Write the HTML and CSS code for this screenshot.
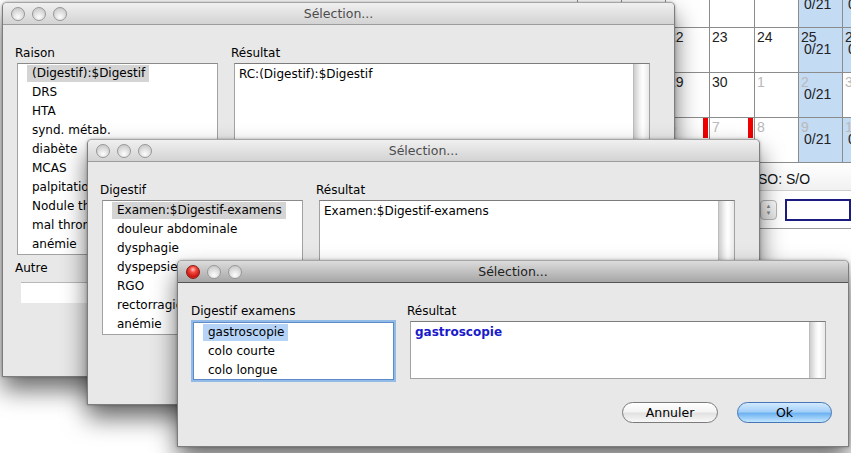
FILE: index.html
```html
<!DOCTYPE html>
<html lang="fr">
<head>
    <meta charset="UTF-8">
    <title>Sélection...</title>
    <link rel="stylesheet" href="styles.css">
</head>
<body>
<div class="desktop">

    <!-- application derrière : agenda -->
    <div class="calendar">
        <div class="cell"></div>
        <div class="cell"></div>
        <div class="cell"></div>
        <div class="cell"></div>
        <div class="cell"></div>
        <div class="cell blue"><div class="num">&nbsp;</div><div class="count">0/21</div></div>
        <div class="cell blue"><div class="num">&nbsp;</div><div class="count">0/21</div></div>

        <div class="cell"><div class="num">20</div></div>
        <div class="cell"><div class="num">21</div></div>
        <div class="cell"><div class="num">22</div></div>
        <div class="cell"><div class="num">23</div></div>
        <div class="cell"><div class="num">24</div></div>
        <div class="cell blue"><div class="num">25</div><div class="count">0/21</div></div>
        <div class="cell blue"><div class="num">26</div><div class="count">0/21</div></div>

        <div class="cell"><div class="num">27</div></div>
        <div class="cell"><div class="num">28</div></div>
        <div class="cell"><div class="num">29</div></div>
        <div class="cell"><div class="num">30</div></div>
        <div class="cell"><div class="num muted">1</div></div>
        <div class="cell blue"><div class="num muted">2</div><div class="count">0/21</div></div>
        <div class="cell"><div class="num muted">3</div></div>

        <div class="cell"><div class="num muted">4</div></div>
        <div class="cell"><div class="num muted">5</div></div>
        <div class="cell"><div class="num muted">6</div><span class="flag"></span></div>
        <div class="cell"><div class="num muted">7</div><span class="flag"></span></div>
        <div class="cell"><div class="num muted">8</div></div>
        <div class="cell blue"><div class="num muted">9</div><div class="count">0/21</div></div>
        <div class="cell blue"><div class="num muted">10</div><div class="count">0/21</div></div>
    </div>

    <div class="infobar">
        <div class="info-text">SO: S/O</div>
        <div class="info-row">
            <div class="stepper"><span>▲</span><span>▼</span></div>
            <div class="info-input"></div>
        </div>
    </div>

    <!-- fenêtre 1 -->
    <div class="window win-raison">
        <div class="titlebar">
            <div class="lights"><span class="light"></span><span class="light"></span><span class="light"></span></div>
            <div class="title">Sélection...</div>
            <div></div>
        </div>
        <div class="pane">
            <div class="col">
                <div class="label">Raison</div>
                <div class="list">
                    <div class="item"><span class="sel">(Digestif):$Digestif</span></div>
                    <div class="item"><span>DRS</span></div>
                    <div class="item"><span>HTA</span></div>
                    <div class="item"><span>synd. métab.</span></div>
                    <div class="item"><span>diabète</span></div>
                    <div class="item"><span>MCAS</span></div>
                    <div class="item"><span>palpitations</span></div>
                    <div class="item"><span>Nodule thyroïdien</span></div>
                    <div class="item"><span>mal thrombo-embolique</span></div>
                    <div class="item"><span>anémie</span></div>
                </div>
                <div class="label other">Autre</div>
                <div class="field"></div>
            </div>
            <div class="col">
                <div class="label right">Résultat</div>
                <div class="result tall">
                    <div class="text">RC:(Digestif):$Digestif</div>
                    <div class="track"></div>
                </div>
            </div>
        </div>
    </div>

    <!-- fenêtre 2 -->
    <div class="window win-digestif">
        <div class="titlebar">
            <div class="lights"><span class="light"></span><span class="light"></span><span class="light"></span></div>
            <div class="title">Sélection...</div>
            <div></div>
        </div>
        <div class="pane">
            <div class="col">
                <div class="label">Digestif</div>
                <div class="list">
                    <div class="item"><span class="sel">Examen:$Digestif-examens</span></div>
                    <div class="item"><span>douleur abdominale</span></div>
                    <div class="item"><span>dysphagie</span></div>
                    <div class="item"><span>dyspepsie</span></div>
                    <div class="item"><span>RGO</span></div>
                    <div class="item"><span>rectorragie</span></div>
                    <div class="item"><span>anémie</span></div>
                </div>
            </div>
            <div class="col">
                <div class="label right">Résultat</div>
                <div class="result mid">
                    <div class="text">Examen:$Digestif-examens</div>
                    <div class="track"></div>
                </div>
            </div>
        </div>
    </div>

    <!-- fenêtre 3 (active) -->
    <div class="window win-examens active">
        <div class="titlebar">
            <div class="lights"><span class="light close"></span><span class="light"></span><span class="light"></span></div>
            <div class="title">Sélection...</div>
            <div></div>
        </div>
        <div class="pane">
            <div class="col">
                <div class="label focus-label">Digestif examens</div>
                <div class="list focus">
                    <div class="item"><span class="sel">gastroscopie</span></div>
                    <div class="item"><span>colo courte</span></div>
                    <div class="item"><span>colo longue</span></div>
                </div>
            </div>
            <div class="col">
                <div class="label right">Résultat</div>
                <div class="result short">
                    <div class="text strong">gastroscopie</div>
                    <div class="track"></div>
                </div>
            </div>
        </div>
        <div class="actions">
            <button class="btn">Annuler</button>
            <button class="btn default">Ok</button>
        </div>
    </div>

</div>
</body>
</html>
```

FILE: styles.css
```css
body {
    margin: 0;
    width: 851px;
    height: 453px;
    overflow: hidden;
    background-color: #fff;
    font-family: "DejaVu Sans", "Open Sans", sans-serif;
    font-size: 12px;
    color: #000;
}
.desktop {
    position: relative;
    width: 851px;
    height: 453px;
}

/* agenda en arrière-plan */
.calendar {
    position: absolute;
    left: 577px;
    top: -18px;
    display: grid;
    grid-template-columns: 44px 44px 44px 45px 44px 44px 44px;
    grid-auto-rows: 45px;
    border-bottom: 1px solid #8c8c8c;
    font-family: "Liberation Sans", Arial, sans-serif;
    font-size: 14px;
    color: #222;
}
.cell {
    position: relative;
    box-sizing: border-box;
    border-left: 1px solid #8c8c8c;
    border-top: 1px solid #8c8c8c;
    padding: 2px 0 0 2px;
    background-color: #fff;
}
.cell.blue {
    background-color: #c4dbf4;
}
.num {
    line-height: 14px;
}
.num.muted {
    color: #b9b9b9;
}
.count {
    line-height: 10px;
    padding-left: 3px;
}
.flag {
    position: absolute;
    right: 1px;
    top: 0;
    width: 5px;
    height: 20px;
    background-color: #f00000;
}
.infobar {
    position: absolute;
    left: 577px;
    top: 163px;
    width: 274px;
    font-family: "Liberation Sans", Arial, sans-serif;
    font-size: 14px;
    color: #111;
}
.info-text {
    height: 21px;
    padding: 6px 0 0 181px;
    line-height: 21px;
    background: linear-gradient(#fff, #f1f1f1);
}
.info-row {
    display: flex;
    align-items: center;
    gap: 8px;
    height: 37px;
    padding-left: 183px;
    border-top: 1px solid #cfcfcf;
    border-bottom: 1px solid #9a9a9a;
    background-color: #fff;
}
.stepper {
    display: flex;
    flex-direction: column;
    align-items: center;
    justify-content: center;
    width: 20px;
    height: 20px;
    box-sizing: border-box;
    border: 1px solid #b5b5b5;
    border-radius: 4px;
    background: linear-gradient(#fdfdfd, #e6e6e6);
    font-size: 6px;
    line-height: 7px;
    color: #8a8a8a;
}
.info-input {
    width: 80px;
    height: 22px;
    box-sizing: border-box;
    border: 2px solid #1c1c80;
    background-color: #fff;
}

/* fenêtres */
.window {
    position: absolute;
    box-sizing: border-box;
    background-color: #e8e8e8;
    border: 1px solid #7d7d7d;
    border-top-color: #a5a5a5;
    border-radius: 5px 5px 0 0;
    box-shadow: 0 13px 24px rgba(0, 0, 0, 0.58), 0 0 3px rgba(0, 0, 0, 0.3);
}
.win-raison {
    left: 2px;
    top: 2px;
    width: 673px;
    height: 375px;
}
.win-digestif {
    left: 87px;
    top: 139px;
    width: 673px;
    height: 266px;
}
.win-examens {
    left: 177px;
    top: 260px;
    width: 672px;
    height: 187px;
}
.titlebar {
    display: grid;
    grid-template-columns: 1fr auto 1fr;
    align-items: center;
    height: 21px;
    border-bottom: 1px solid #9c9c9c;
    border-radius: 4px 4px 0 0;
    background: linear-gradient(#f0f0f0, #d3d3d3);
}
.active .titlebar {
    background: linear-gradient(#dcdcdc, #a6a6a6);
    border-bottom-color: #555;
}
.lights {
    display: flex;
    gap: 7px;
    padding-left: 8px;
}
.light {
    width: 14px;
    height: 14px;
    box-sizing: border-box;
    border-radius: 50%;
    border: 1px solid #979797;
    background: radial-gradient(circle at 50% 75%, #fdfdfd, #dadada 55%, #c0c0c0);
}
.light.close {
    border-color: #8a1a14;
    background: radial-gradient(circle at 50% 30%, #ffc4bd 0, #f24a3f 30%, #c8150c 70%, #f07063);
}
.title {
    font-size: 12.5px;
    color: #4c4c4c;
}
.active .title {
    color: #202020;
}

.pane {
    display: grid;
    grid-template-columns: 201px 416px;
    column-gap: 16px;
    align-items: start;
    padding: 20px 0 0 14px;
}
.win-examens .pane {
    padding-left: 15px;
}
.col {
    display: flex;
    flex-direction: column;
}
.label {
    line-height: 16px;
    margin: 0 0 2px -2px;
}
.label.right {
    margin-left: -3px;
}
.label.other {
    margin-top: 5px;
}
.focus-label {
    margin-bottom: 3px;
}
.list {
    background-color: #fff;
    border: 1px solid #a2a2a2;
    border-top-color: #8a8a8a;
}
.item {
    height: 19px;
    padding-left: 9px;
    white-space: nowrap;
    overflow: hidden;
}
.item span {
    display: inline-block;
    margin-top: 1px;
    padding: 0 4px 0 5px;
    line-height: 17px;
}
.item .sel {
    background-color: #d4d4d4;
}
.list.focus {
    height: 58px;
    box-sizing: border-box;
    border-color: #5e8bc8;
    box-shadow: 0 0 0 2px #93bbe8;
}
.list.focus .sel {
    background-color: #b5d3f7;
}
.field {
    width: 197px;
    height: 20px;
    margin: 4px 0 0 4px;
    background-color: #fff;
    border-top: 1px solid #b8b8b8;
}
.result {
    display: flex;
    box-sizing: border-box;
    background-color: #fff;
    border: 1px solid #a2a2a2;
    border-top-color: #7c7c7c;
}
.result.tall {
    height: 200px;
}
.result.mid {
    height: 150px;
}
.result.short {
    height: 58px;
}
.result .text {
    flex: 1;
    padding: 2px 4px;
    line-height: 17px;
}
.result .strong {
    font-weight: bold;
    color: #1a1acb;
}
.track {
    width: 15px;
    border-left: 1px solid #bdbdbd;
    background: linear-gradient(to right, #cdcdcd, #f4f4f4 40%, #fff 60%, #e9e9e9);
}

.actions {
    display: flex;
    justify-content: flex-end;
    gap: 19px;
    margin-top: 22px;
    padding-right: 16px;
}
.btn {
    width: 96px;
    height: 21px;
    box-sizing: border-box;
    padding: 0;
    border: 1px solid #7b7b7b;
    border-radius: 11px;
    font-family: "DejaVu Sans", sans-serif;
    font-size: 12.5px;
    color: #000;
    background: linear-gradient(#ffffff, #f4f4f4 45%, #e2e2e2 55%, #f8f8f8);
}
.btn.default {
    width: 95px;
    border-color: #4775b3;
    background: linear-gradient(#d3eaff, #a4d0f8 45%, #6fb3f2 55%, #c2e6ff);
}
```
